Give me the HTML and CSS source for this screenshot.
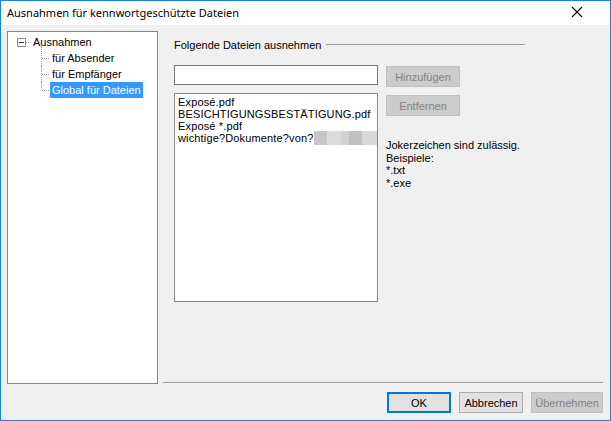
FILE: index.html
```html
<!DOCTYPE html>
<html lang="de">
<head>
<meta charset="utf-8">
<title>Ausnahmen für kennwortgeschützte Dateien</title>
<link rel="stylesheet" href="styles.css">
</head>
<body>
<div class="window">
  <div class="titlebar">
    <span class="title">Ausnahmen für kennwortgeschützte Dateien</span>
    <svg class="close" width="12" height="12" viewBox="0 0 12 12"><path d="M1 1 L11 11 M11 1 L1 11" stroke="#000" stroke-width="1.1" fill="none"/></svg>
  </div>
  <div class="body">
    <div class="main">
      <div class="tree">
        <div class="tree-row root">
          <span class="expander"><span class="minus"></span></span>
          <span class="root-link"></span>
          <span class="label">Ausnahmen</span>
        </div>
        <div class="children">
          <div class="tree-row child"><span class="label">für Absender</span></div>
          <div class="tree-row child"><span class="label">für Empfänger</span></div>
          <div class="tree-row child last"><span class="label selected">Global für Dateien</span></div>
        </div>
      </div>
      <div class="pane">
        <div class="group-head">
          <span class="group-title">Folgende Dateien ausnehmen</span>
          <span class="group-line"></span>
        </div>
        <div class="editor">
          <div class="col-left">
            <div class="textbox"></div>
            <div class="listbox">
              <div class="item">Exposé.pdf</div>
              <div class="item">BESICHTIGUNGSBESTÄTIGUNG.pdf</div>
              <div class="item">Exposé *.pdf</div>
              <div class="item">wichtige?Dokumente?von?<span class="blur"></span></div>
            </div>
          </div>
          <div class="col-right">
            <div class="btn disabled side">Hinzufügen</div>
            <div class="btn disabled side">Entfernen</div>
            <div class="hint">
              <div>Jokerzeichen sind zulässig.</div>
              <div>Beispiele:</div>
              <div>*.txt</div>
              <div>*.exe</div>
            </div>
          </div>
        </div>
      </div>
    </div>
    <div class="buttons">
      <div class="btn default w-ok">OK</div>
      <div class="btn w-ok">Abbrechen</div>
      <div class="btn disabled w-apply">Übernehmen</div>
    </div>
  </div>
</div>
</body>
</html>
```

FILE: styles.css
```css
* { box-sizing: border-box; }
html, body { margin: 0; padding: 0; }
body {
  width: 611px;
  height: 421px;
  overflow: hidden;
  background: #f0f0f0;
  font-family: "Liberation Sans", Arial, sans-serif;
  font-size: 11px;
  color: #000;
}
.window {
  width: 611px;
  height: 421px;
  border: 1px solid #1883d7;
  display: flex;
  flex-direction: column;
  background: #f0f0f0;
}
.titlebar {
  height: 25px;
  background: #fff;
  display: flex;
  align-items: center;
  padding-left: 6px;
  padding-right: 27px;
  justify-content: space-between;
}
.title {
  font-family: "Noto Sans", "Open Sans", sans-serif;
  font-size: 11px;
  color: #000;
  padding-bottom: 2px;
}
.close { margin-bottom: 2px; }
.body {
  flex: 1;
  display: flex;
  flex-direction: column;
  padding: 6px 7px 7px 6px;
}
.main {
  display: flex;
  gap: 5px;
}
.tree {
  width: 151px;
  height: 353px;
  background: #fff;
  border: 1px solid #828790;
  padding-top: 2px;
}
.tree-row {
  height: 16px;
  display: flex;
  align-items: center;
  position: relative;
}
.root { padding-left: 9px; }
.expander {
  width: 9px;
  height: 9px;
  border: 1px solid #919191;
  display: flex;
  align-items: center;
  justify-content: center;
  background: #fff;
}
.minus {
  width: 5px;
  height: 1px;
  background: #333;
}
.root-link {
  width: 5px;
  border-top: 1px dotted #a0a0a0;
}
.children {
  margin-left: 33px;
}
.child { padding-left: 9px; }
.child::before {
  content: "";
  position: absolute;
  left: 0;
  top: 0;
  height: 16px;
  border-left: 1px dotted #a0a0a0;
}
.child.last::before { height: 8px; }
.child::after {
  content: "";
  position: absolute;
  left: 1px;
  top: 8px;
  width: 7px;
  border-top: 1px dotted #a0a0a0;
}
.children .tree-row:first-child::before { top: -4px; height: 20px; }
.label {
  padding: 0 2px;
  line-height: 16px;
  height: 16px;
}
.selected {
  background: #3399ff;
  color: #fff;
}
.pane {
  width: 440px;
  height: 352px;
  border-bottom: 1px solid #a0a0a0;
  padding: 8px 0 0 11px;
}
.group-head {
  display: flex;
  align-items: center;
  height: 13px;
}
.group-title { line-height: 13px; }
.group-line {
  margin-left: 5px;
  width: 199px;
  border-top: 1px solid #a0a0a0;
  margin-top: -3px;
}
.editor {
  display: flex;
  gap: 8px;
  margin-top: 13px;
}
.col-left { width: 204px; }
.textbox {
  height: 20px;
  background: #fff;
  border: 1px solid #7a7a7a;
}
.listbox {
  margin-top: 8px;
  height: 209px;
  background: #fff;
  border: 1px solid #828790;
  padding: 2px 0 0 3px;
  letter-spacing: 0.15px;
  overflow: hidden;
}
.item {
  line-height: 12px;
  height: 12px;
  white-space: nowrap;
}
.blur {
  display: inline-block;
  vertical-align: top;
  width: 64px;
  height: 14px;
  margin-top: -1px;
  background: linear-gradient(90deg,
    #c6c6c6 0 13px, #dcdcdc 13px 27px, #d2d2d2 27px 35px,
    #c2c2c2 35px 48px, #d8d8d8 48px 64px);
}
.col-right {
  width: 74px;
  padding-top: 1px;
}
.btn {
  height: 21px;
  display: flex;
  align-items: center;
  justify-content: center;
  background: #e1e1e1;
  border: 1px solid #adadad;
  color: #000;
}
.btn.disabled {
  background: #cccccc;
  border-color: #bfbfbf;
  color: #838383;
}
.side { width: 74px; }
.side + .side { margin-top: 8px; }
.hint {
  margin-top: 23px;
  line-height: 12.5px;
  white-space: nowrap;
}
.buttons {
  display: flex;
  justify-content: flex-end;
  gap: 8px;
  margin-top: 8px;
}
.btn.default {
  border: 2px solid #0078d7;
}
.w-ok { width: 64px; }
.w-apply { width: 72px; }
```
